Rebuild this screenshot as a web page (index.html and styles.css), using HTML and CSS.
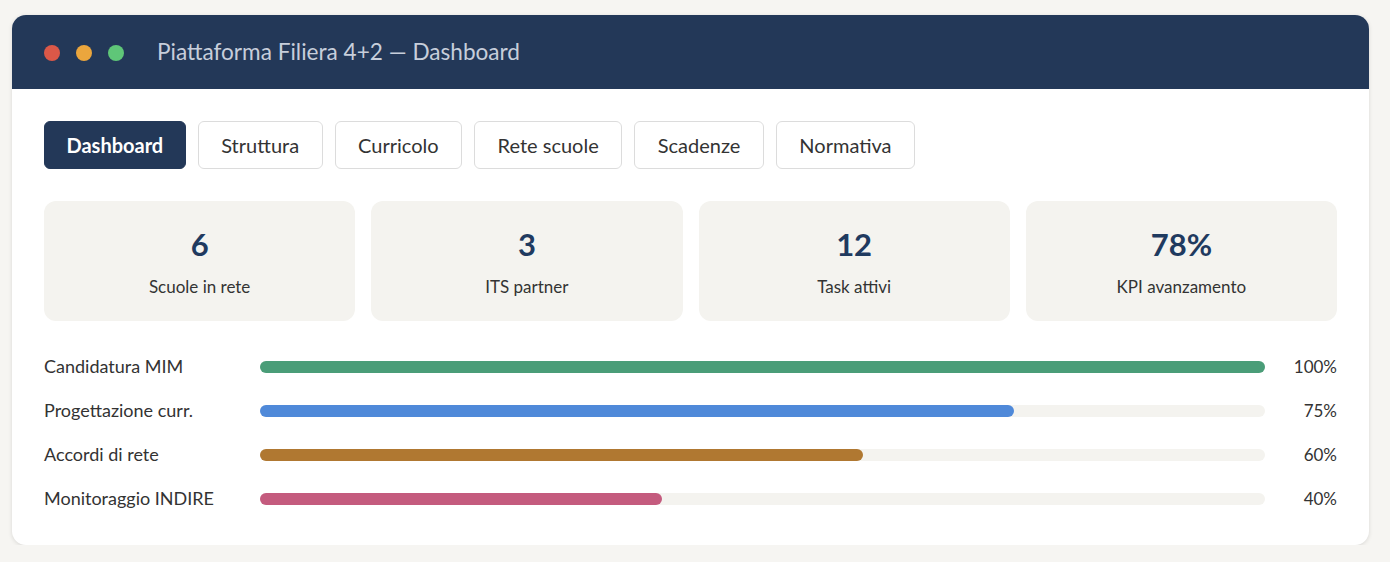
FILE: index.html
```html
<!DOCTYPE html>
<html lang="it">
<head>
<meta charset="UTF-8">
<meta name="viewport" content="width=device-width, initial-scale=1.0">
<title>Piattaforma Filiera 4+2 - Dashboard</title>
<link rel="stylesheet" href="styles.css">
</head>
<body>
<div class="window">
  <div class="titlebar">
    <span class="dot red"></span>
    <span class="dot yellow"></span>
    <span class="dot green"></span>
    <span class="title">Piattaforma Filiera 4+2 — Dashboard</span>
  </div>

  <div class="content">
    <nav class="tabs">
      <button class="tab active">Dashboard</button>
      <button class="tab">Struttura</button>
      <button class="tab">Curricolo</button>
      <button class="tab">Rete scuole</button>
      <button class="tab">Scadenze</button>
      <button class="tab">Normativa</button>
    </nav>

    <div class="stats">
      <div class="stat"><div class="stat-value">6</div><div class="stat-label">Scuole in rete</div></div>
      <div class="stat"><div class="stat-value">3</div><div class="stat-label">ITS partner</div></div>
      <div class="stat"><div class="stat-value">12</div><div class="stat-label">Task attivi</div></div>
      <div class="stat"><div class="stat-value">78%</div><div class="stat-label">KPI avanzamento</div></div>
    </div>

    <div class="progress-list">
      <div class="progress-row">
        <span class="progress-label">Candidatura MIM</span>
        <div class="track"><div class="fill green-fill" style="width: 100%"></div></div>
        <span class="progress-pct">100%</span>
      </div>
      <div class="progress-row">
        <span class="progress-label">Progettazione curr.</span>
        <div class="track"><div class="fill blue-fill" style="width: 75%"></div></div>
        <span class="progress-pct">75%</span>
      </div>
      <div class="progress-row">
        <span class="progress-label">Accordi di rete</span>
        <div class="track"><div class="fill brown-fill" style="width: 60%"></div></div>
        <span class="progress-pct">60%</span>
      </div>
      <div class="progress-row">
        <span class="progress-label">Monitoraggio INDIRE</span>
        <div class="track"><div class="fill pink-fill" style="width: 40%"></div></div>
        <span class="progress-pct">40%</span>
      </div>
    </div>
  </div>
</div>
</body>
</html>
```

FILE: styles.css
```css
body {
  margin: 0;
  padding: 15px 21px 0 12px;
  background: #f6f5f2;
  font-family: Lato, "Liberation Sans", sans-serif;
  color: #333;
}
.window {
  background: #fff;
  border-radius: 14px;
  overflow: hidden;
  box-shadow: 0 1px 4px rgba(0,0,0,0.12);
}
.titlebar {
  height: 74px;
  background: #233858;
  display: flex;
  align-items: center;
  padding-left: 32px;
}
.dot {
  width: 16px;
  height: 16px;
  border-radius: 50%;
  margin-right: 16px;
  margin-top: 1px;
}
.red { background: #db5848; }
.yellow { background: #eba63d; }
.green { background: #5fc678; }
.title {
  margin-left: 17px;
  margin-bottom: 2px;
  font-size: 22.6px;
  color: #c7cedb;
}
.content {
  padding: 32px 32px 24px;
}
.tabs {
  display: flex;
  gap: 12px;
}
.tab {
  height: 48px;
  padding: 0 22.5px;
  font-family: inherit;
  font-size: 20px;
  color: #333;
  background: #fff;
  border: 1px solid #dcdcdc;
  border-radius: 6px;
}
.tab.active {
  background: #233858;
  border-color: #233858;
  color: #fff;
  font-weight: bold;
  padding: 0 21.5px;
}
.stats {
  display: grid;
  grid-template-columns: repeat(4, 1fr);
  gap: 16px;
  margin-top: 32px;
}
.stat {
  height: 120px;
  background: #f4f3ef;
  border-radius: 12px;
  display: flex;
  flex-direction: column;
  align-items: center;
  justify-content: center;
}
.stat-value {
  font-size: 31px;
  font-weight: bold;
  color: #1f3a5f;
}
.stat-label {
  margin-top: 13px;
  font-size: 17px;
  color: #333;
}
.progress-list {
  margin-top: 24px;
}
.progress-row {
  height: 44px;
  display: flex;
  align-items: center;
}
.progress-label {
  width: 216px;
  font-size: 18px;
  margin-top: -2px;
}
.track {
  flex: 1;
  height: 12px;
  background: #f4f3ef;
  border-radius: 6px;
}
.fill {
  height: 100%;
  border-radius: 6px;
}
.green-fill { background: #4a9d78; }
.blue-fill { background: #4f89d9; }
.brown-fill { background: #b07831; }
.pink-fill { background: #c45b7e; }
.progress-pct {
  width: 72px;
  text-align: right;
  font-size: 17px;
  margin-top: -2px;
}
```
